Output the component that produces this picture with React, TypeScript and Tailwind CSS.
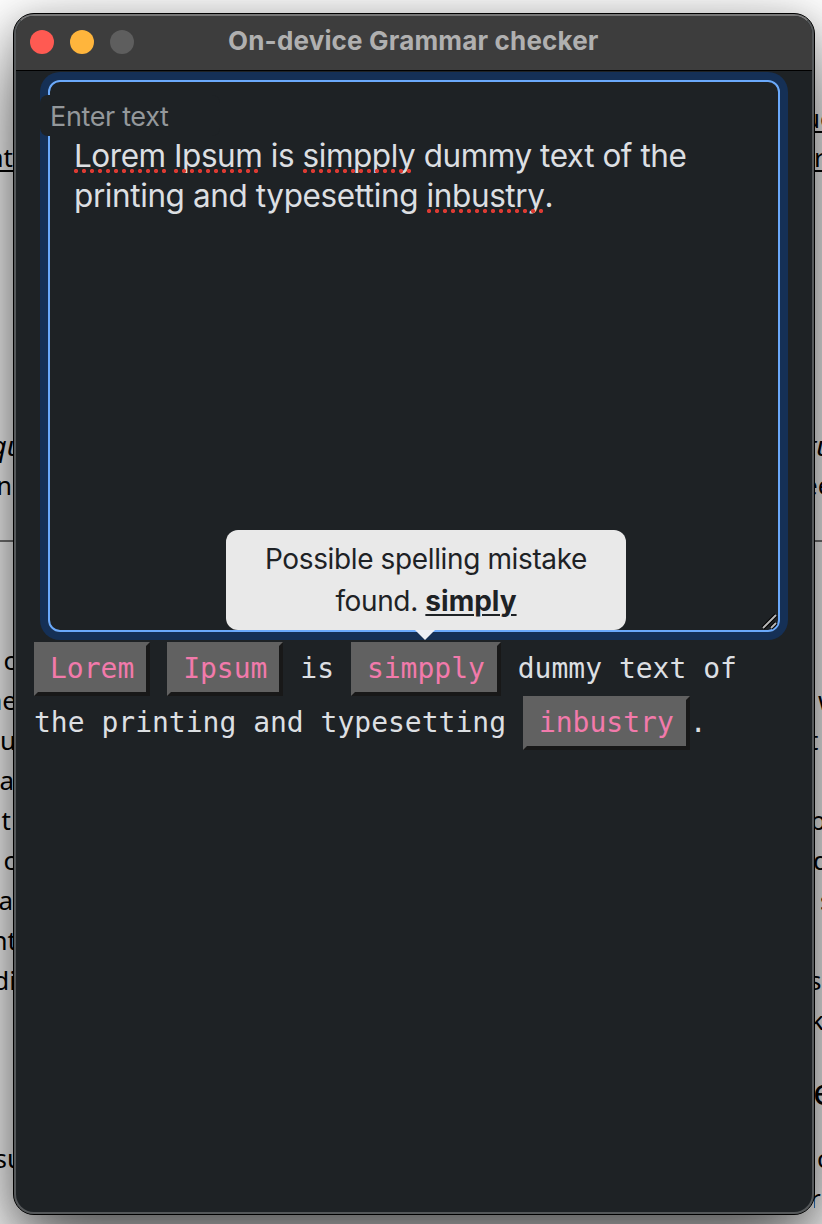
import React from 'react';

type Line = { t: string; h: string; c?: string };

const leftLines: Line[] = [
  { t: '', h: 'h-[137px]' },
  { t: 'at', h: 'h-[40px]', c: 'underline underline-offset-[3px] decoration-2 pr-px' },
  { t: '', h: 'h-[248px]' },
  { t: 'qu', h: 'h-[40px]', c: 'italic -mr-[9px] text-[28px]' },
  { t: 'n', h: 'h-[40px]', c: 'pr-[2px] text-[25px]' },
  { t: '', h: 'h-[35px]' },
  { t: '', h: 'h-[2px]', c: 'w-full bg-[#777]' },
  { t: '', h: 'h-[98px]' },
  { t: 'c', h: 'h-[40px]', c: '-mr-[2px]' },
  { t: 'ne', h: 'h-[40px]', c: '-mr-[3px]' },
  { t: 'u', h: 'h-[40px]', c: '-mr-[2px]' },
  { t: 'a', h: 'h-[40px]' },
  { t: 't', h: 'h-[40px]', c: 'pr-[3px]' },
  { t: 'c', h: 'h-[40px]', c: '-mr-[2px]' },
  { t: 'a', h: 'h-[40px]', c: 'pr-px' },
  { t: 'nt', h: 'h-[40px]', c: '-mr-[3px]' },
  { t: 'di', h: 'h-[40px]', c: '-mr-[2px]' },
  { t: '', h: 'h-[138px]' },
  { t: 'su', h: 'h-[40px]', c: '-mr-[9px]' },
];

const rightLines: Line[] = [
  { t: '', h: 'h-[98px]' },
  { t: 'uc', h: 'h-[39px]', c: 'underline underline-offset-[3px] decoration-2 -ml-[10px]' },
  { t: 'r', h: 'h-[40px]', c: 'underline underline-offset-[3px] decoration-2 ml-0 pr-2' },
  { t: '', h: 'h-[248px]' },
  { t: 'tu', h: 'h-[40px]', c: 'italic -ml-[7px] text-[28px]' },
  { t: 'ee', h: 'h-[40px]', c: '-ml-[11px]' },
  { t: '', h: 'h-[35px]' },
  { t: '', h: 'h-[2px]', c: 'w-full bg-[#777]' },
  { t: '', h: 'h-[138px]' },
  { t: 'w', h: 'h-[40px]', c: 'ml-[4px]' },
  { t: 't', h: 'h-[40px]', c: '-ml-[5px]' },
  { t: '', h: 'h-[40px]' },
  { t: 'b', h: 'h-[40px]', c: '-ml-[4px]' },
  { t: 'd', h: 'h-[40px]', c: '-ml-[1px]' },
  { t: 's', h: 'h-[40px]', c: 'ml-[6px]' },
  { t: '', h: 'h-[40px]' },
  { t: 's', h: 'h-[40px]', c: '-ml-[5px]' },
  { t: 'k', h: 'h-[40px]', c: '-ml-[4px]' },
  { t: 'e', h: 'h-[75px] text-[37px] leading-[102px]', c: '-ml-px' },
  { t: '', h: 'h-[23px]' },
  { t: 'c', h: 'h-[40px]', c: 'ml-[3px]' },
  { t: 'r', h: 'h-[40px]', c: '-ml-[4px]' },
];

function Strip({ lines, align }: { lines: Line[]; align: string }) {
  return (
    <div className={`flex flex-col overflow-hidden ${align}`}>
      {lines.map((l, i) => (
        <div key={i} className={`shrink-0 whitespace-nowrap ${l.h} ${l.c ?? ''}`}>
          {l.t}
        </div>
      ))}
    </div>
  );
}

function Misspelled({ children }: { children: React.ReactNode }) {
  return (
    <span className="relative after:absolute after:left-0 after:right-0 after:top-[33px] after:h-1 after:bg-[radial-gradient(circle_at_2px_2px,#dc3b33_1.8px,transparent_2.4px)] after:bg-[length:8px_4px] after:content-['']">
      {children}
    </span>
  );
}

function Chip({ children }: { children: React.ReactNode }) {
  return (
    <span className="inline-block h-[54px] border-4 border-t-[#616161] border-l-[#616161] border-r-[#181818] border-b-[#181818] bg-[#616161] px-3 align-top leading-[45px] text-[#f27aab]">
      {children}
    </span>
  );
}

export default function App() {
  return (
    <div className="relative h-[1224px] w-[822px] overflow-hidden bg-white">
      <div className="absolute inset-0 flex justify-between font-['Noto_Sans','Liberation_Sans',sans-serif] text-[26px] leading-[40px] text-black">
        <Strip lines={leftLines} align="w-[14px] items-end" />
        <Strip lines={rightLines} align="w-[8px] items-start" />
      </div>

      <div className="relative ml-[13px] pt-[13px]">
        <div className="h-[1202px] w-[802px] rounded-[21px] border border-black bg-[#1e2225] shadow-[0_36px_80px_rgba(0,0,0,0.66),0_4px_30px_rgba(0,0,0,0.16)]">
          <div className="flex h-full flex-col overflow-hidden rounded-[20px] border-2 border-[#55585a] border-t-[#777777]">
            <header className="flex h-[55px] shrink-0 items-center border-b border-black bg-[#3d3d3d] pb-[2px] pl-[14px]">
              <div className="flex gap-4">
                <span className="size-6 rounded-full bg-[#ff5a52]" />
                <span className="size-6 rounded-full bg-[#ffb53c]" />
                <span className="size-6 rounded-full bg-[#5e5e5e]" />
              </div>
              <h1 className="ml-[94px] -mt-[3px] whitespace-nowrap font-['Inter',sans-serif] text-[26px] font-bold tracking-[0.17px] text-[#b0b0b0]">
                On-device Grammar checker
              </h1>
            </header>

            <main className="flex flex-col pt-[9px]">
              <div className="relative ml-8 h-[552px] w-[732px] rounded-xl border-2 border-[#6aa9fb] shadow-[0_0_0_8px_#153056] font-['Inter',sans-serif]">
                <div className="-ml-[10px] mt-[13px] h-[41px] w-[180px] rounded-lg bg-[#1e2225] pl-[10px] text-[27px] leading-[43px] tracking-[-0.35px] text-[#94989b]">
                  Enter text
                </div>
                <p className="ml-6 whitespace-nowrap text-[31.5px] leading-[40px] tracking-[-0.46px] text-[#dcdfe2]">
                  <Misspelled>Lorem</Misspelled> <Misspelled>Ipsum</Misspelled> is <Misspelled>simpply</Misspelled> dummy text of the
                  <br />
                  <span className="tracking-[-0.4px]">
                    printing and typesetting <Misspelled>inbustry</Misspelled>.
                  </span>
                </p>
                <svg className="absolute right-0 bottom-0" width="18" height="18" viewBox="0 0 18 18">
                  <path d="M3 16 16 3M11 16l5-5" stroke="#000" strokeWidth="4" />
                  <path d="M3 16 16 3M11 16l5-5" stroke="#b8b8b8" strokeWidth="1.8" />
                </svg>
                <div className="absolute top-[448px] left-[176px] h-[100px] w-[400px] rounded-xl bg-[#e9e9e9] pt-[8px] text-center text-[28px] leading-[42px] tracking-[-0.37px] text-[#1e2225]">
                  Possible spelling mistake
                  <br />
                  found. <b className="tracking-normal underline decoration-2 underline-offset-[3px]">simply</b>
                  <span className="absolute top-[100px] left-[189px] border-x-[10px] border-t-[10px] border-x-transparent border-t-[#edf0f6]" />
                </div>
              </div>
              <p className="ml-[18px] mt-[10px] whitespace-nowrap font-['DejaVu_Sans_Mono',monospace] text-[28px] leading-[54px] text-[#dcdfe2]">
                <Chip>Lorem</Chip> <Chip>Ipsum</Chip> is <Chip>simpply</Chip> dummy text of
                <br />
                the printing and typesetting <Chip>inbustry</Chip>.
              </p>
            </main>
          </div>
        </div>
      </div>
    </div>
  );
}
